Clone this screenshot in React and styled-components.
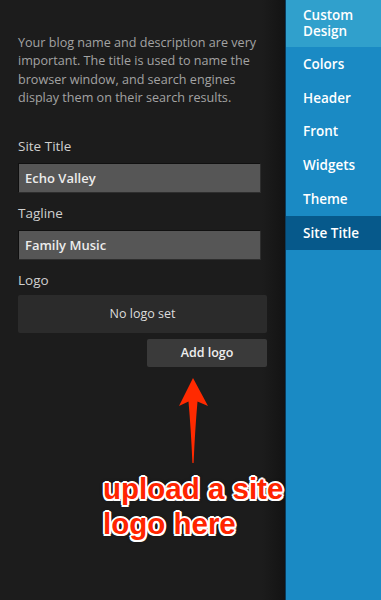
import React from "react";
import styled, { createGlobalStyle } from "styled-components";

const Global = createGlobalStyle`
  html, body { margin: 0; padding: 0; background: #1c1c1c; }
  body { font-family: "Open Sans", "Liberation Sans", sans-serif; }
  * { box-sizing: border-box; }
`;

const Page = styled.div`
  position: relative;
  display: flex;
  width: 381px;
  height: 600px;
  overflow: hidden;
`;

const Panel = styled.div`
  width: 285px;
  flex: none;
  padding: 34px 18px 0 18px;
  background: linear-gradient(to right, #1c1c1c 0, #1c1c1c 262px, #131313 285px);
`;

const Description = styled.p`
  margin: 0 0 28px 0;
  font-size: 12.6px;
  line-height: 18.4px;
  color: #a3a3a3;
`;

const Label = styled.div`
  font-size: 13.5px;
  line-height: 20px;
  color: #cfcfcf;
  margin-bottom: ${(p) => p.$gap || 7}px;
`;

const Input = styled.div`
  width: 243px;
  height: 30px;
  margin-bottom: 10px;
  padding: 0 6px;
  display: flex;
  align-items: center;
  background: #565656;
  border: 1px solid #101010;
  border-right-color: #2e2e2e;
  border-bottom-color: #2e2e2e;
  font-size: 13px;
  font-weight: 600;
  color: #ececec;
`;

const LogoBox = styled.div`
  width: 249px;
  height: 38px;
  display: flex;
  align-items: center;
  justify-content: center;
  background: #2b2b2b;
  border-radius: 2px;
  font-size: 12.5px;
  color: #dcdcdc;
`;

const ButtonRow = styled.div`
  width: 249px;
  display: flex;
  justify-content: flex-end;
  margin-top: 6px;
`;

const Button = styled.div`
  width: 120px;
  height: 28px;
  display: flex;
  align-items: center;
  justify-content: center;
  background: #3a3a3a;
  border-radius: 2px;
  font-size: 12.5px;
  font-weight: 600;
  color: #eeeeee;
`;

const Sidebar = styled.nav`
  flex: 1;
  display: flex;
  flex-direction: column;
  background: #1a8ac4;
  border-left: 1px solid #0a3c5e;
`;

const NavItem = styled.div`
  display: flex;
  align-items: center;
  padding: ${(p) => (p.$tall ? "6px 10px 7px 17px" : "0 10px 0 17px")};
  height: ${(p) => (p.$tall ? "47px" : "33.8px")};
  background: ${(p) => (p.$head ? "#30a0cc" : p.$active ? "#06598b" : "transparent")};
  font-size: 13.5px;
  line-height: 16px;
  font-weight: 600;
  color: #ffffff;
`;

const Arrow = styled.svg`
  position: absolute;
  left: 0;
  top: 0;
  pointer-events: none;
`;

const Note = styled.div`
  position: absolute;
  left: 103px;
  top: 471px;
  font-family: "Liberation Sans", Arial, sans-serif;
  font-weight: 700;
  font-size: 29.5px;
  line-height: 35px;
  color: #ff2400;
  white-space: nowrap;
  text-shadow:
    2px 0 0 #fff, -2px 0 0 #fff, 0 2px 0 #fff, 0 -2px 0 #fff,
    1.5px 1.5px 0 #fff, -1.5px 1.5px 0 #fff, 1.5px -1.5px 0 #fff, -1.5px -1.5px 0 #fff,
    0 0 4px rgba(0,0,0,0.6);
`;

const navItems = ["Colors", "Header", "Front", "Widgets", "Theme", "Site Title"];

export default function App() {
  return (
    <>
      <Global />
      <Page>
        <Panel>
          <Description>
            Your blog name and description are very important. The title is used to name the
            browser window, and search engines display them on their search results.
          </Description>
          <Label>Site Title</Label>
          <Input>Echo Valley</Input>
          <Label>Tagline</Label>
          <Input>Family Music</Input>
          <Label $gap={5}>Logo</Label>
          <LogoBox>No logo set</LogoBox>
          <ButtonRow>
            <Button>Add logo</Button>
          </ButtonRow>
        </Panel>
        <Sidebar>
          <NavItem $tall $head>
            Custom
            <br />
            Design
          </NavItem>
          {navItems.map((n) => (
            <NavItem key={n} $active={n === "Site Title"}>
              {n}
            </NavItem>
          ))}
        </Sidebar>
        <Arrow width="381" height="600" viewBox="0 0 381 600">
          <path
            d="M193 378 L208 406 L197.5 401.5 Q195 430 193.6 463 L192.4 463 Q191 430 188.5 401.5 L179 406 Z"
            fill="#ff2a00"
          />
        </Arrow>
        <Note>
          upload a site
          <br />
          logo here
        </Note>
      </Page>
    </>
  );
}
